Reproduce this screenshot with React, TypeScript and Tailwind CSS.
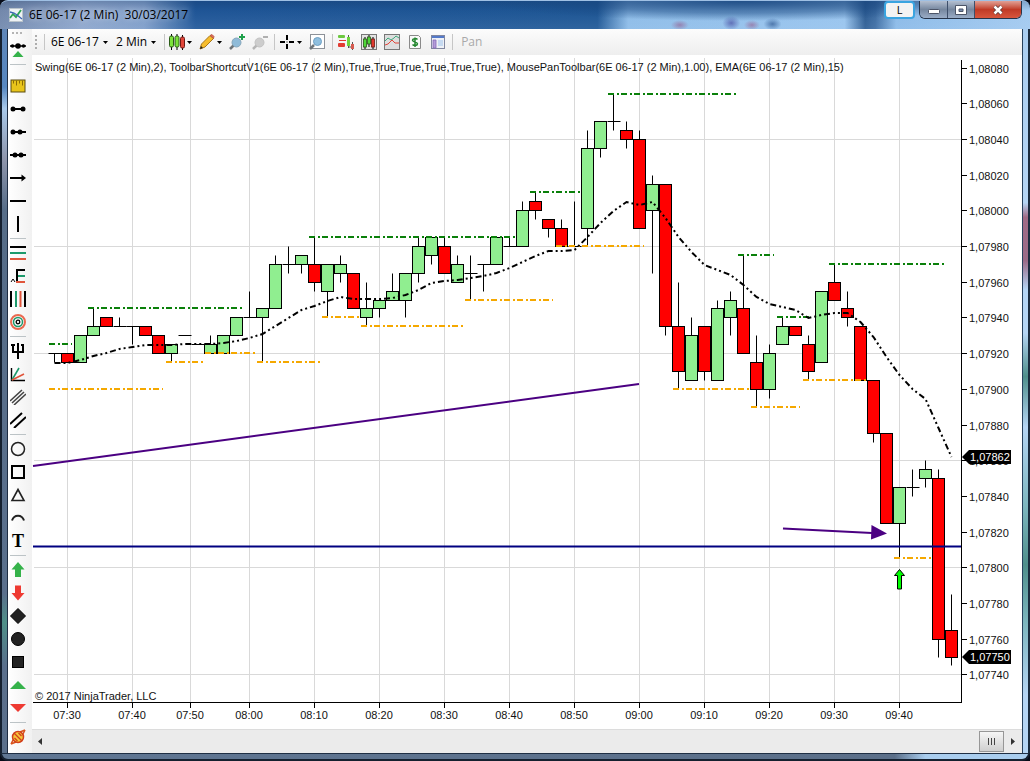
import type { ReactNode } from "react";

type Bar = [open: number, high: number, low: number, close: number];

// Prices are the last digits of 1,0xxxx (920 = 1,07920)
const bars: Bar[] = [
  [920, 920, 915, 920],
  [920, 920, 915, 915],
  [915, 930, 915, 930],
  [930, 945, 930, 935],
  [940, 940, 935, 935],
  [935, 940, 935, 935],
  [935, 935, 925, 935],
  [935, 935, 930, 930],
  [930, 930, 920, 920],
  [920, 925, 915, 925],
  [930, 930, 930, 930],
  [925, 925, 925, 925],
  [920, 930, 920, 925],
  [920, 930, 920, 930],
  [930, 940, 930, 940],
  [940, 955, 940, 940],
  [940, 945, 915, 945],
  [945, 975, 945, 970],
  [970, 980, 965, 970],
  [970, 975, 965, 975],
  [970, 985, 955, 960],
  [955, 970, 940, 970],
  [965, 975, 960, 970],
  [965, 965, 945, 945],
  [940, 960, 935, 945],
  [945, 950, 940, 950],
  [950, 965, 950, 955],
  [950, 965, 940, 965],
  [965, 985, 960, 980],
  [975, 985, 970, 985],
  [980, 985, 965, 965],
  [960, 975, 960, 970],
  [965, 975, 950, 965],
  [970, 970, 955, 970],
  [970, 985, 970, 985],
  [980, 985, 980, 980],
  [980, 1005, 980, 1000],
  [1005, 1010, 995, 1000],
  [995, 995, 985, 990],
  [990, 995, 980, 980],
  [980, 1005, 980, 980],
  [990, 1045, 980, 1035],
  [1035, 1050, 1030, 1050],
  [1050, 1065, 1045, 1050],
  [1045, 1050, 1035, 1040],
  [1040, 1045, 990, 990],
  [1000, 1020, 965, 1015],
  [1015, 1015, 930, 935],
  [935, 960, 900, 910],
  [905, 940, 905, 930],
  [935, 935, 905, 910],
  [905, 950, 905, 945],
  [940, 955, 930, 950],
  [945, 975, 920, 920],
  [915, 930, 890, 900],
  [900, 925, 895, 920],
  [925, 940, 925, 935],
  [935, 935, 930, 930],
  [925, 930, 905, 910],
  [915, 955, 915, 955],
  [960, 970, 950, 950],
  [945, 955, 935, 940],
  [935, 935, 905, 905],
  [905, 905, 870, 875],
  [875, 875, 825, 825],
  [825, 845, 805, 845],
  [845, 855, 840, 845],
  [850, 860, 845, 855],
  [850, 855, 750, 760],
  [765, 785, 745, 750],
];

const ema = [
  363, 363, 360, 356, 353, 349, 347, 345, 345, 345, 344, 344, 344, 343, 341, 338, 334, 326, 318, 310,
  306, 301, 297, 299, 299, 299, 298, 295, 290, 283, 281, 280, 278, 276, 273, 268, 262, 256, 251, 251,
  250, 237, 223, 211, 202, 205, 202, 218, 237, 252, 265, 270, 275, 285, 297, 304, 307, 310, 318, 315,
  313, 313, 322, 337, 357, 375, 389, 399, 428, 457,
];

// [price, x start, x end]
const swingHighs = [
  [925, 49, 72], [945, 88, 242], [985, 309, 515], [1010, 530, 580],
  [1065, 608, 736], [975, 738, 774], [940, 777, 812], [970, 829, 944],
];
const swingLows = [
  [900, 49, 163], [915, 166, 203], [920, 205, 256], [915, 257, 320], [940, 322, 360],
  [935, 361, 463], [950, 465, 553], [980, 556, 644], [900, 673, 750], [890, 751, 800],
  [905, 803, 868], [805, 894, 932],
];

const times: [string, number][] = [
  ["07:30", 67], ["07:40", 132], ["07:50", 190], ["08:00", 249], ["08:10", 314], ["08:20", 379], ["08:30", 444],
  ["08:40", 509], ["08:50", 574], ["09:00", 639], ["09:10", 704], ["09:20", 769], ["09:30", 834], ["09:40", 899],
];

const prices = Array.from({ length: 18 }, (_, i) => 1080 - i * 20);

const xOf = (i: number) => 54.5 + i * 13;
const yOf = (price: number) => Math.floor(68 + (1080 - price) * 1.785) + 0.5;
const label = (price: number) => `1,0${7000 + price}`;

function PriceTag({ y, text }: { y: number; text: string }) {
  return (
    <g>
      <path d={`M962 ${y}l7-7h42v14h-42z`} fill="#000" />
      <text x="970" y={y + 4} fill="#fff">{text}</text>
    </g>
  );
}

function Chart() {
  return (
    <svg
      viewBox="32 55 990 674"
      className="block h-full w-full bg-white font-['Liberation_Sans',Arial,sans-serif] text-[11px]"
      role="img"
      aria-label="6E 06-17 2 minute candlestick chart"
    >
      {/* Grid */}
      <g stroke="#d9d9d9">
        {times.map(([t, x]) => <line key={t} x1={x + 0.5} x2={x + 0.5} y1="58" y2="702" />)}
        {[1040, 980, 920, 860, 800, 740].map((p) => <line key={p} x1="34" x2="961" y1={yOf(p)} y2={yOf(p)} />)}
      </g>

      {/* Candles */}
      <g stroke="#000">
        {bars.map(([o, h, l, c], i) => {
          const x = xOf(i);
          const top = yOf(Math.max(o, c));
          const bottom = yOf(Math.min(o, c));
          return (
            <g key={i}>
              {h !== l && <line x1={x} x2={x} y1={yOf(h)} y2={yOf(l)} />}
              {o === c
                ? <line x1={x - 6} x2={x + 7} y1={top} y2={top} />
                : <rect x={x - 6} y={top} width="12" height={bottom - top} fill={c > o ? "#90ee90" : "#f00"} />}
            </g>
          );
        })}
      </g>

      {/* Swing levels */}
      <g strokeWidth="2" strokeDasharray="6 3 2 2">
        {swingHighs.map(([p, a, b]) => <line key={a} x1={a} x2={b} y1={yOf(p) - 0.5} y2={yOf(p) - 0.5} stroke="#0a800a" />)}
        {swingLows.map(([p, a, b]) => <line key={a} x1={a} x2={b} y1={yOf(p) - 0.5} y2={yOf(p) - 0.5} stroke="#f5a800" />)}
      </g>

      {/* EMA */}
      <polyline
        points={ema.map((y, i) => `${xOf(i)},${y}`).join(" ")}
        fill="none"
        stroke="#000"
        strokeWidth="2"
        strokeDasharray="6 3 2 3 2 3"
      />

      {/* Drawn lines and markers */}
      <line x1="33" y1="466" x2="639" y2="384" stroke="#4b0082" strokeWidth="2" />
      <line x1="33" y1="546.5" x2="961" y2="546.5" stroke="#000080" strokeWidth="2" />
      <line x1="783" y1="528.5" x2="872" y2="533" stroke="#4b0082" strokeWidth="2" />
      <path d="M871.500 525l15.500 8.500-16 6z" fill="#4b0082" />
      <path d="M899.500 569.500l5 6h-3v13.500h-4v-13.500h-3z" fill="#0f0" stroke="#000" />

      {/* Axes */}
      <g stroke="#000">
        <path d="M961.500 60V702.500M33 702.500H962" fill="none" />
        {times.map(([t, x]) => <line key={t} x1={x + 0.5} x2={x + 0.5} y1="702" y2="708" />)}
        {prices.map((p) => <line key={p} x1="962" x2="967" y1={yOf(p)} y2={yOf(p)} />)}
      </g>
      <g fill="#111">
        {times.map(([t, x]) => <text key={t} x={x} y="719" textAnchor="middle">{t}</text>)}
        {prices.map((p) => <text key={p} x="969" y={yOf(p) + 4}>{label(p)}</text>)}
        <text x="35" y="71">
          Swing(6E 06-17 (2 Min),2), ToolbarShortcutV1(6E 06-17 (2 Min),True,True,True,True,True,True), MousePanToolbar(6E 06-17 (2 Min),1.00), EMA(6E 06-17 (2 Min),15)
        </text>
        <text x="35" y="700">© 2017 NinjaTrader, LLC</text>
      </g>
      <PriceTag y={457} text="1,07862" />
      <PriceTag y={657} text="1,07750" />
    </svg>
  );
}

function Icon({ children }: { children: ReactNode }) {
  return (
    <svg viewBox="0 0 16 16" className="block h-4 w-4 shrink-0" fill="none" stroke="#000" strokeWidth="2" aria-hidden="true">
      {children}
    </svg>
  );
}

function Tool({ name, children }: { name: string; children: ReactNode }) {
  return (
    <button type="button" aria-label={name} className="flex h-[23px] w-full items-center justify-center pr-1">
      <Icon>{children}</Icon>
    </button>
  );
}

function Divider() {
  return (
    <div className="flex h-[6px] items-center">
      <div className="ml-[2px] h-px w-4 bg-[#bcc3c6]" />
    </div>
  );
}

function DrawingTools() {
  return (
    <aside className="w-6 shrink-0 bg-gradient-to-r from-white to-[#f1f1f1]">
      <div className="flex h-2 items-center gap-[2px] pl-1">
        <i className="h-[2px] w-[2px] bg-[#b5b5b5]" />
        <i className="h-[2px] w-[2px] bg-[#b5b5b5]" />
        <i className="h-[2px] w-[2px] bg-[#b5b5b5]" />
      </div>
      <Tool name="Shortcut bar">
        <path d="M0 5h16" strokeWidth="1.500" />
        <circle cx="2.500" cy="5" r="1.800" fill="#000" stroke="none" />
        <circle cx="13.500" cy="5" r="1.800" fill="#000" stroke="none" />
        <circle cx="8" cy="5" r="2.800" fill="#000" stroke="none" />
        <path d="M8 10l5.500 6h-11z" fill="#35b24a" stroke="none" />
      </Tool>
      <div className="h-[14px] pt-1 pl-[2px]">
        <div className="h-px w-4 bg-[#bcc3c6]" />
      </div>
      <Tool name="Ruler">
        <rect x="1" y="2" width="14" height="12" fill="#e8c41a" stroke="#5a4d10" strokeWidth="1" />
        <path d="M3.500 2.500v3M6.500 2.500v5M9.500 2.500v3M12.500 2.500v5" stroke="#8c6d05" strokeWidth="1" />
      </Tool>
      <Tool name="Line">
        <path d="M3 8h10" />
        <circle cx="3" cy="8" r="2.500" fill="#000" stroke="none" />
        <circle cx="13" cy="8" r="2.500" fill="#000" stroke="none" />
      </Tool>
      <Tool name="Ray">
        <path d="M2 8h14" />
        <circle cx="3" cy="8" r="2.500" fill="#000" stroke="none" />
        <circle cx="10" cy="8" r="2.500" fill="#000" stroke="none" />
      </Tool>
      <Tool name="Extended line">
        <path d="M0 8h16" />
        <circle cx="5" cy="8" r="2.500" fill="#000" stroke="none" />
        <circle cx="11" cy="8" r="2.500" fill="#000" stroke="none" />
      </Tool>
      <Tool name="Arrow line">
        <path d="M0 8h13" />
        <path d="M11.500 4.500l4.500 3.500-4.500 3.500z" fill="#000" stroke="none" />
      </Tool>
      <Tool name="Horizontal line"><path d="M0 8h16" /></Tool>
      <Tool name="Vertical line"><path d="M8 0v16" /></Tool>
      <Divider />
      <Tool name="Fibonacci retracements">
        <path d="M0 2h16" />
        <path d="M0 8h16" stroke="#1d9a6c" />
        <path d="M0 14h16" stroke="#e0553b" />
      </Tool>
      <Tool name="Fibonacci extensions">
        <path d="M15 2H7v12" />
        <path d="M8 8h7" stroke="#1d9a6c" />
        <path d="M6 14h9" stroke="#e0553b" />
        <path d="M1 14l2-3 2 3" strokeWidth="1" />
      </Tool>
      <Tool name="Fibonacci time extensions">
        <path d="M1 0v16M15 0v16" />
        <path d="M6 0v16" stroke="#1d9a6c" />
        <path d="M10.500 0v16" stroke="#e0553b" />
      </Tool>
      <Tool name="Fibonacci circle">
        <circle cx="8" cy="8" r="7" stroke="#ea6a50" />
        <circle cx="8" cy="8" r="4.500" stroke="#1d9a6c" strokeWidth="1.500" />
        <circle cx="8" cy="8" r="1.800" strokeWidth="1.300" />
      </Tool>
      <Divider />
      <Tool name="Andrews pitchfork"><path d="M3 2v7h10V2M8 0v16M1 2h4M11 2h3" /></Tool>
      <Tool name="Gann fan">
        <path d="M1.500 2v12.500H15" strokeWidth="1.400" />
        <path d="M2 14L9 2" stroke="#1d9a6c" strokeWidth="1.600" />
        <path d="M2 14l12-6" stroke="#e0553b" strokeWidth="1.600" />
      </Tool>
      <Tool name="Regression channel">
        <path d="M0 12L12 1M2 14L14 3M4 16L16 5" stroke="#444" strokeWidth="1.600" />
      </Tool>
      <Tool name="Trend channel"><path d="M0 12L12 1M4 16L16 5" /></Tool>
      <Divider />
      <Tool name="Ellipse"><circle cx="8" cy="8" r="6.500" stroke="#222" strokeWidth="1.500" /></Tool>
      <Tool name="Rectangle"><rect x="2" y="2" width="12" height="12" /></Tool>
      <Tool name="Triangle"><path d="M8 2.500l6 11H2z" stroke="#222" strokeWidth="1.600" /></Tool>
      <Tool name="Arc"><path d="M2 10.500C4 4 12 4 14 10.500" stroke="#222" /></Tool>
      <button type="button" aria-label="Text" className="flex h-[23px] w-full items-center justify-center pr-1 font-['Liberation_Serif',serif] text-lg font-bold text-black">
        T
      </button>
      <Divider />
      <Tool name="Arrow up"><path d="M8 0l6.500 7.500H11V15H5V7.500H1.500z" fill="#35b24a" stroke="none" /></Tool>
      <Tool name="Arrow down"><path d="M8 15.500L14.500 8H11V.5H5V8H1.500z" fill="#ee3a32" stroke="none" /></Tool>
      <Tool name="Diamond"><path d="M8 .5L15.500 8 8 15.500.5 8z" fill="#222" strokeWidth="1" /></Tool>
      <Tool name="Dot"><circle cx="8" cy="8" r="6.500" fill="#222" strokeWidth="1" /></Tool>
      <Tool name="Square"><rect x="2.500" y="2.500" width="11" height="11" fill="#222" strokeWidth="1" /></Tool>
      <Tool name="Triangle up"><path d="M8 4l8 8H0z" fill="#35b24a" stroke="none" /></Tool>
      <Tool name="Triangle down"><path d="M8 12l8-8H0z" fill="#ee3a32" stroke="none" /></Tool>
      <Divider />
      <Tool name="Remove drawings">
        <path d="M1 15l2.500-5M15 1l-2.500 5M1 15l5-2M15 1l-5 2" stroke="#d9531e" strokeWidth="1.500" />
        <circle cx="8" cy="8" r="5.500" fill="#f6c63a" stroke="#d2401c" strokeWidth="1.500" />
        <path d="M4 4l8 8M4.500 9l3 3M8.500 4l3 3" stroke="#d2401c" strokeWidth="1.300" />
      </Tool>
    </aside>
  );
}

function Caret() {
  return (
    <svg viewBox="0 0 5 3" className="h-[3px] w-[5px] shrink-0" aria-hidden="true">
      <path d="M0 0h5L2.500 3z" fill="#000" />
    </svg>
  );
}

function Separator() {
  return <div className="h-4 w-px shrink-0 bg-[#c6c6c6]" />;
}

function Picker({ name, value, options }: { name: string; value: string; options: string[] }) {
  return (
    <label className="flex items-center gap-1">
      <select aria-label={name} defaultValue={value} className="field-sizing-content appearance-none bg-transparent text-xs text-black outline-none">
        {options.map((o) => <option key={o}>{o}</option>)}
      </select>
      <Caret />
    </label>
  );
}

function BarButton({ name, menu, children }: { name: string; menu?: boolean; children: ReactNode }) {
  return (
    <button type="button" aria-label={name} className="flex items-center gap-[2px]">
      <Icon>{children}</Icon>
      {menu && <Caret />}
    </button>
  );
}

function Toolbar() {
  return (
    <div className="flex h-[26px] shrink-0 items-center bg-gradient-to-b from-[#fcfcfc] to-[#eeeeee] pl-[3px]">
      <div className="mr-[7px] flex flex-col gap-[2px]">
        <i className="h-[2px] w-[2px] bg-[#adadad]" />
        <i className="h-[2px] w-[2px] bg-[#adadad]" />
        <i className="h-[2px] w-[2px] bg-[#adadad]" />
        <i className="h-[2px] w-[2px] bg-[#adadad]" />
      </div>
      <Separator />
      <div className="flex items-center gap-2 px-[6px] pr-2">
        <Picker name="Instrument" value="6E 06-17" options={["6E 06-17", "ES 06-17"]} />
        <Picker name="Interval" value="2 Min" options={["1 Min", "2 Min", "5 Min"]} />
      </div>
      <Separator />
      <div className="flex items-center gap-[7px] pr-[6px] pl-1">
        <BarButton name="Chart style" menu>
          <path d="M2.500 0v16M8 0v16M13.500 1v15" strokeWidth="1" />
          <rect x=".5" y="2" width="4" height="11" rx="1.500" fill="#7be23a" stroke="#2b5a18" strokeWidth="1" />
          <rect x="6" y="2" width="4" height="11" rx="1.500" fill="#7be23a" stroke="#2b5a18" strokeWidth="1" />
          <rect x="11.500" y="3" width="4" height="11" rx="1.500" fill="#e2463a" stroke="#6e1b15" strokeWidth="1" />
        </BarButton>
        <BarButton name="Drawing tools" menu>
          <path d="M1 15l1.500-5L11 1.500l3.500 3L6 13z" fill="#f7bd2c" stroke="#a8771a" strokeWidth="1" />
          <path d="M11 1.500l3.500 3 .5-2L13 .5z" fill="#e26b5c" stroke="#b3543c" strokeWidth=".8" />
          <path d="M1 15l1-3 2 2z" fill="#222" stroke="none" />
        </BarButton>
        <BarButton name="Zoom in">
          <path d="M1 15l4-4" stroke="#6e7478" strokeWidth="2.500" />
          <circle cx="7.500" cy="8.500" r="4.500" fill="#8fbbd8" stroke="#86a6ba" strokeWidth="1" />
          <path d="M13 0v6M10 3h6" stroke="#1fa04a" />
        </BarButton>
        <BarButton name="Zoom out">
          <path d="M1 15l4-4" stroke="#b5b5b5" strokeWidth="2.500" />
          <circle cx="7.500" cy="8.500" r="4.500" fill="#cdcdcd" stroke="#c2c2c2" strokeWidth="1" />
          <path d="M11 3h5" stroke="#b0b0b0" />
        </BarButton>
      </div>
      <Separator />
      <div className="flex items-center gap-[7px] pr-[7px] pl-1">
        <BarButton name="Cross hair" menu>
          <path d="M8 1v5M8 10v5M1 8h5M10 8h5" />
          <path d="M7.500 8h1" strokeWidth="1" />
        </BarButton>
        <BarButton name="Data box">
          <rect x="1.500" y=".5" width="14" height="14" fill="#fff" stroke="#8d9299" strokeWidth="1" />
          <path d="M1 15l4-4" stroke="#6e7478" strokeWidth="2.500" />
          <circle cx="8.500" cy="7.500" r="4" fill="#8fbfdf" stroke="#6f9fc2" strokeWidth="1" />
        </BarButton>
      </div>
      <Separator />
      <div className="flex items-center gap-[7px] pr-[6px] pl-[5px]">
        <BarButton name="Chart trader">
          <path d="M10.500 1v13M9 4h3M14.500 8v8M11 13h4" stroke="#555" strokeWidth="1" />
          <rect x="0" y="1" width="7" height="3" rx="1" fill="#6dc840" stroke="none" />
          <rect x="0" y="9" width="7" height="4" rx="1" fill="#e23c32" stroke="none" />
          <path d="M1 6.500h7" stroke="#e23c32" strokeWidth="1" />
          <rect x="9" y="3" width="3" height="9" fill="#6dd63c" stroke="none" />
          <rect x="13" y="10" width="3" height="5" fill="#d55b50" stroke="none" />
        </BarButton>
        <BarButton name="Data series">
          <rect x=".5" y=".5" width="15" height="15" fill="#e4e4e4" stroke="#777" strokeWidth="1" />
          <path d="M4 3v12M8 1v12M12 3v12" strokeWidth="1" />
          <rect x="2.500" y="5" width="3" height="8" fill="#4fd83a" stroke="#2b5a18" strokeWidth=".8" />
          <rect x="6.500" y="3" width="3" height="7" fill="#4fd83a" stroke="#2b5a18" strokeWidth=".8" />
          <rect x="10.500" y="5" width="3" height="8" fill="#e0392f" stroke="#6e1b15" strokeWidth=".8" />
        </BarButton>
        <BarButton name="Indicators">
          <rect x=".5" y=".5" width="15" height="15" fill="#dedede" stroke="#777" strokeWidth="1" />
          <path d="M1 7l3-3 3 2 3-2 2-2 3 2" stroke="#3daa7c" strokeWidth="1" />
          <path d="M1 11l3-1 4-4 3 3h4" stroke="#e2463a" strokeWidth="1" />
        </BarButton>
        <BarButton name="Strategies">
          <path d="M2.500 1.500h9l2 2v11h-11z" fill="#fafafa" stroke="#8a8a8a" strokeWidth="1" />
          <path d="M10.500 5.500C9 4 5.500 4.500 5.500 6.300S10.500 7.800 10.500 9.800 7 12 5.500 10.500M8 3.500v9.500" stroke="#23862e" strokeWidth="1.500" />
        </BarButton>
        <BarButton name="Properties">
          <rect x="1.500" y="1.500" width="13" height="13" fill="#eef1f7" stroke="#8187a0" strokeWidth="1" />
          <path d="M2 3h12" stroke="#5479c9" />
          <path d="M3 6h3v8H3z" fill="#b39bd8" stroke="#8569b8" strokeWidth=".8" />
          <path d="M8 7h5M8 9h5M8 11h5" stroke="#9ec3ec" strokeWidth="1" />
        </BarButton>
      </div>
      <Separator />
      <button type="button" disabled className="pl-2 text-xs text-[#a9a9a9]">Pan</button>
    </div>
  );
}

function HorizontalScroll() {
  return (
    <div className="flex h-6 shrink-0 items-center border-t border-[#dcdcdc] bg-[#ebebeb]">
      <button type="button" aria-label="Scroll left" className="flex h-full w-4 items-center justify-center">
        <svg viewBox="0 0 4 7" className="h-[7px] w-1"><path d="M4 0v7L0 3.500z" fill="#333" /></svg>
      </button>
      <div className="flex flex-1 justify-end">
        <button type="button" aria-label="Scroll position" className="flex h-[21px] w-[25px] items-center justify-center gap-[2px] border border-[#979797] bg-gradient-to-b from-[#f6f6f6] to-[#cfcfcf]">
          <i className="h-[7px] w-px bg-[#444]" />
          <i className="h-[7px] w-px bg-[#444]" />
          <i className="h-[7px] w-px bg-[#444]" />
        </button>
      </div>
      <button type="button" aria-label="Scroll right" className="flex h-full w-[18px] items-center justify-center">
        <svg viewBox="0 0 4 7" className="h-[7px] w-1"><path d="M0 0v7l4-3.500z" fill="#333" /></svg>
      </button>
    </div>
  );
}

function TitleBar() {
  return (
    <header className="flex h-[29px] shrink-0 items-start justify-between rounded-t-lg border-t border-[#9fc0e4] bg-[radial-gradient(9px_5px_at_66%_24px,rgba(150,70,120,0.5),transparent),radial-gradient(9px_7px_at_71%_22px,rgba(60,60,150,0.6),transparent),radial-gradient(8px_5px_at_73%_24px,rgba(150,70,120,0.5),transparent),radial-gradient(9px_6px_at_75%_23px,rgba(30,70,130,0.6),transparent),radial-gradient(260px_20px_at_72%_0px,rgba(25,72,130,0.9),rgba(25,72,130,0.5)_60%,transparent),linear-gradient(to_bottom,rgba(10,40,85,0.25),transparent_35%,rgba(190,220,250,0.1)),linear-gradient(to_right,#7388ab_0%,#8fa6cb_8%,#7f9dc8_14%,#1f5596_19%,#1e5694_58%,#8fbde8_61%,#9ac5ee_82%,#2d5c92_84%,#3d6ca2_85%,#8dbbe8_87%,#a5cbf0_100%)] pr-2 pl-[9px]">
      <div className="flex h-full items-center gap-[6px]">
        <svg viewBox="0 0 14 14" className="h-[14px] w-[14px]" aria-hidden="true">
          <rect x=".5" y=".5" width="13" height="13" fill="#eef2f4" stroke="#b9c3cb" />
          <path d="M1 10l3-4 3 3 5-7" fill="none" stroke="#2ea354" strokeWidth="1.800" />
          <path d="M1 4l4 1 3 2 5 4" fill="none" stroke="#3b65b5" strokeWidth="1.300" />
        </svg>
        <h1 className="text-xs whitespace-pre text-black [text-shadow:0_0_6px_rgba(255,255,255,0.7)]">6E 06-17 (2 Min)  30/03/2017</h1>
      </div>
      <div className="flex items-start gap-1">
        <button type="button" className="h-[18px] w-[31px] rounded-sm border-2 border-[#3aa4e0] bg-[#f3f3f3] text-[11px] leading-3 text-black">L</button>
        <div className="flex h-[18px] overflow-hidden rounded-b-md border border-t-0 border-[#26344a]">
          <button type="button" aria-label="Minimize" className="flex w-7 items-center justify-center border-r border-[#3e4f6b] bg-gradient-to-b from-[#b4bfd0] via-[#76879f] to-[#9aacc6]">
            <svg viewBox="0 0 12 12" className="h-3 w-3"><rect x=".5" y="5.500" width="11" height="4" rx="1" fill="#fff" stroke="#4c5568" /></svg>
          </button>
          <button type="button" aria-label="Maximize" className="flex w-[27px] items-center justify-center border-r border-[#3e4f6b] bg-gradient-to-b from-[#b4bfd0] via-[#76879f] to-[#9aacc6]">
            <svg viewBox="0 0 12 12" className="h-3 w-3">
              <path d="M.5 1.500h11v9H.5z" fill="#fff" stroke="#4c5568" />
              <path d="M4 5h4v2.500H4z" fill="#7c90b0" stroke="#4c5568" />
            </svg>
          </button>
          <button type="button" aria-label="Close" className="flex w-[46px] items-center justify-center bg-gradient-to-b from-[#e0a096] via-[#c03a26] to-[#d8563d]">
            <svg viewBox="0 0 12 12" className="h-3 w-3">
              <path d="M2.500 2.500l7 7M9.500 2.500l-7 7" stroke="#5d3a3a" strokeWidth="4" />
              <path d="M2.500 2.500l7 7M9.500 2.500l-7 7" stroke="#fff" strokeWidth="2.500" />
            </svg>
          </button>
        </div>
      </div>
    </header>
  );
}

export default function App() {
  return (
    <div className="flex h-screen w-full flex-col overflow-hidden bg-[#070b18] font-['Open_Sans','Noto_Sans',sans-serif]">
      <TitleBar />
      <div className="flex min-h-0 flex-1">
        {/* Glass frame, left */}
        <div className="w-2 shrink-0 border-r border-l-2 border-r-[#1d2c42] border-l-[#15202f] bg-[linear-gradient(to_bottom,#5f86b8_0%,#5687c1_8%,#a9c9ea_11%,#8e95ab_18%,#566d88_25%,#5a6f8c_78%,#4f8f88_82%,#5a6f8c_88%,#5b708b_100%)]" />
        <DrawingTools />
        <main className="flex min-w-0 flex-1 flex-col">
          <Toolbar />
          <div className="min-h-0 flex-1">
            <Chart />
          </div>
          <HorizontalScroll />
        </main>
        {/* Glass frame, right */}
        <div className="w-2 shrink-0 border-r-2 border-l border-r-[#1a2b3e] border-l-[#25405c] bg-[linear-gradient(to_bottom,#a9cdf0_0%,#b5d5f4_24%,#a06a86_26%,#9a6b88_32%,#b5d5f4_36%,#b5d5f4_42%,#4f8f8c_48%,#b5d5f4_55%,#7db6bf_66%,#4f8f8c_74%,#7db6bf_82%,#b5d5f4_92%,#b5d5f4_100%)]" />
      </div>
      {/* Glass frame, bottom */}
      <div className="h-2 shrink-0 rounded-b-lg border-x-2 border-t border-b-2 border-t-[#1f2f44] border-x-[#15202f] border-b-[#15202f] bg-[linear-gradient(to_right,#5f7693_0%,#5b6f89_87%,#a9cdee_90%,#a9cdee_100%)]" />
    </div>
  );
}
